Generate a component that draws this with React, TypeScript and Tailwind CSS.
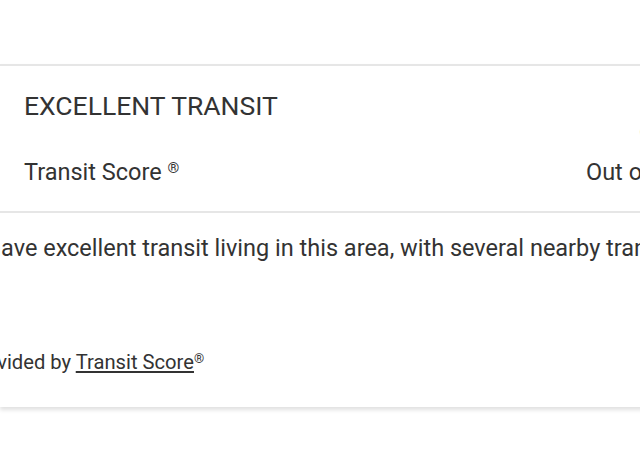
export default function App() {
  return (
    <div className="h-[460px] w-[640px] overflow-hidden bg-white pt-16 font-['Roboto',sans-serif] text-[#333]">
      <div className="w-[860px] border-t-2 border-[#e6e6e6] bg-white shadow-[0_3px_4px_rgba(0,0,0,0.12)]">
        <header className="flex border-b-2 border-[#e6e6e6] pb-[24px] pt-[22px]">
          <div className="w-[586px] pl-6">
            <h2 className="text-[26.5px] leading-[36px] uppercase">Excellent Transit</h2>
            <div className="mt-[33px] text-[23.5px] leading-[30px]">
              Transit Score <sup className="text-[15px]">®</sup>
            </div>
          </div>
          <div className="flex flex-col">
            <div className="mt-[19px] pl-[52px] text-[40px] leading-[40px] text-[#777]">86</div>
            <div className="mt-[10px] text-[23.5px] leading-[30px]">Out of 100</div>
          </div>
        </header>

        <div className="pb-[32px] pt-[20px]">
          <p className="-ml-[73px] whitespace-nowrap text-[23.5px] leading-[30px]">
            You'll have excellent transit living in this area, with several nearby transit options.
          </p>
          <p className="-ml-[79px] mt-[86px] whitespace-nowrap text-[20.2px] leading-[26px]">
            Data provided by <a className="underline">Transit Score</a>
            <sup className="text-[13px]">®</sup>
          </p>
        </div>
      </div>
    </div>
  );
}
